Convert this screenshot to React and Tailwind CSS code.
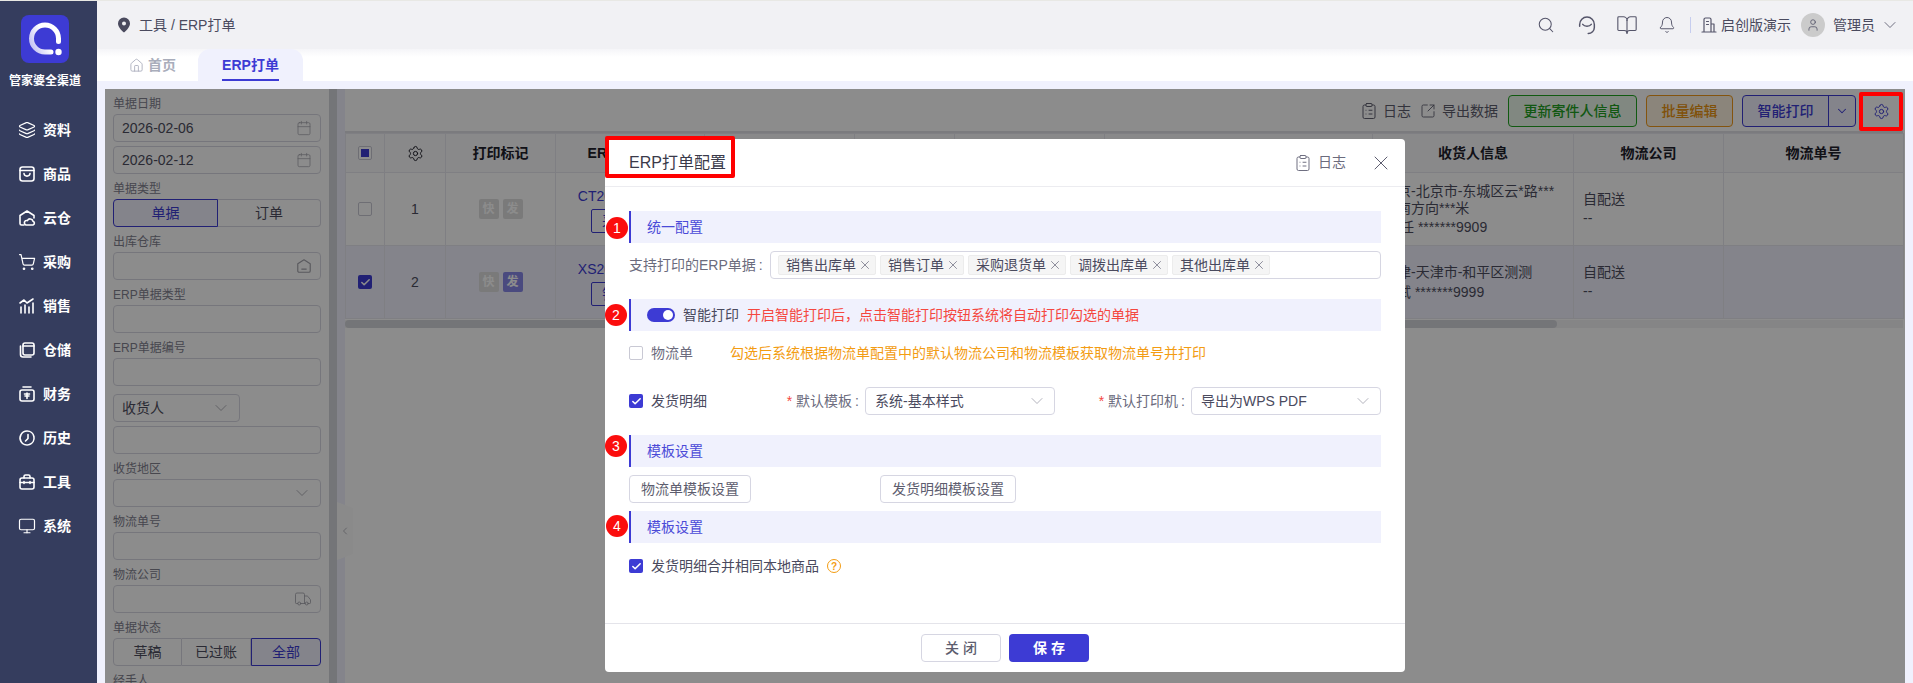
import { useId } from "react";
import {
  Bell,
  BookOpen,
  Calendar,
  Check,
  ChevronDown,
  ChevronLeft,
  ClipboardList,
  Home,
  Layers,
  Monitor,
  Search,
  Settings,
  ShoppingCart,
  SquareArrowOutUpRight,
  Truck,
  User,
  X,
} from "lucide-react";

const FONT = { fontFamily: '"Liberation Sans", "Noto Sans CJK SC", sans-serif' };

const Logo = () => {
  const id = useId();
  return (
    <svg width="48" height="48" viewBox="0 0 48 48">
      <defs>
        <linearGradient id={id} x1="0" y1="0.7" x2="1" y2="0.2">
          <stop offset="0" stopColor="#c9c8f5" />
          <stop offset="0.5" stopColor="#ffffff" />
          <stop offset="1" stopColor="#ffffff" />
        </linearGradient>
      </defs>
      <rect width="48" height="48" rx="8" fill="#3d3bd4" />
      <path
        d="M37.5 26.5V23.5A13.5 13.5 0 1 0 24 37H30"
        fill="none"
        stroke={`url(#${id})`}
        strokeWidth="5"
        strokeLinecap="round"
      />
      <circle cx="37.5" cy="37" r="3.2" fill="#fff" />
    </svg>
  );
};

const Ico = ({ children, size = 18, sw = 1.6 }) => (
  <svg
    width={size}
    height={size}
    viewBox="0 0 18 18"
    fill="none"
    stroke="currentColor"
    strokeWidth={sw}
    strokeLinecap="round"
    strokeLinejoin="round"
  >
    {children}
  </svg>
);

const BagIcon = () => (
  <Ico>
    <rect x="2" y="2" width="14" height="14" rx="2.5" />
    <path d="M2 5.5H16M6 8.5C6.5 12 11.5 12 12 8.5" />
  </Ico>
);
const CloudHouseIcon = () => (
  <Ico>
    <path d="M6 16H3.5A1.5 1.5 0 0 1 2 14.5V6.5L9 2L16 6.5V9" />
    <path d="M8 16H15A2 2 0 0 0 15 12.2A3 3 0 0 0 9.4 11.6A2.3 2.3 0 0 0 8 16Z" />
  </Ico>
);
const ChartIcon = () => (
  <Ico>
    <path d="M2 6L6 3L9 6L15 2M3 16V10M7 16V8M11 16V10M15 16V6" />
  </Ico>
);
const StackIcon = () => (
  <Ico>
    <rect x="5" y="2" width="11" height="12" rx="2" />
    <path d="M5 5H16M2.5 5V13.5A2.5 2.5 0 0 0 5 16H13" />
  </Ico>
);
const JarIcon = () => (
  <Ico>
    <path d="M5 2H13M4 5H14A2 2 0 0 1 16 7V14A2 2 0 0 1 14 16H4A2 2 0 0 1 2 14V7A2 2 0 0 1 4 5Z" />
    <path d="M9 8V13.5M6.5 9H11.5M7 11H11" />
  </Ico>
);
const ClockIcon = () => (
  <Ico>
    <path d="M9 2A7 7 0 1 1 3 12.5M3 12.5A7 7 0 0 1 9 2" />
    <path d="M10 5.5V9.5L7.5 12" />
  </Ico>
);
const ToolboxIcon = () => (
  <Ico>
    <path d="M6 5V3.5A1.5 1.5 0 0 1 7.5 2H10.5A1.5 1.5 0 0 1 12 3.5V5" />
    <rect x="2" y="5" width="14" height="11" rx="2" />
    <path d="M2 9.5H16M6 8.5V10.5M12 8.5V10.5" />
  </Ico>
);
const DepotIcon = () => (
  <Ico size={16} sw={1.3}>
    <path d="M2 6.5L9 2L16 6.5V14.5A1.5 1.5 0 0 1 14.5 16H3.5A1.5 1.5 0 0 1 2 14.5Z" />
    <path d="M6.5 12.5H11.5" />
  </Ico>
);
const HeadsetIcon = () => (
  <Ico size={22} sw={1.2}>
    <path d="M3 8.5A6 6 0 0 1 15 8.5M3 8.5V10M15 8.5V11A5 5 0 0 1 10 16M5.5 8.5C7 10.5 11 10.5 12.5 8.5" />
  </Ico>
);
const OfficeIcon = () => (
  <Ico sw={1.2}>
    <path d="M2 16H16M4 16V3.5A1.5 1.5 0 0 1 5.5 2H9.5A1.5 1.5 0 0 1 11 3.5V16M11 8H14V16M6.5 5.5H8.5M6.5 8.5H8.5" />
  </Ico>
);
const PinIcon = () => (
  <svg width="14" height="16" viewBox="0 0 14 16">
    <path
      fillRule="evenodd"
      d="M7 0.5A6 6 0 0 1 13 6.5C13 10 9.5 13.5 7 15.5C4.5 13.5 1 10 1 6.5A6 6 0 0 1 7 0.5ZM7 4.5A2 2 0 1 0 7 8.5A2 2 0 1 0 7 4.5Z"
      fill="#4a4a5e"
    />
  </svg>
);

const MENU = [
  ["资料", <Layers key="a" size={18} strokeWidth={1.6} />],
  ["商品", <BagIcon key="b" />],
  ["云仓", <CloudHouseIcon key="c" />],
  ["采购", <ShoppingCart key="d" size={18} strokeWidth={1.6} />],
  ["销售", <ChartIcon key="e" />],
  ["仓储", <StackIcon key="f" />],
  ["财务", <JarIcon key="g" />],
  ["历史", <ClockIcon key="h" />],
  ["工具", <ToolboxIcon key="i" />],
  ["系统", <Monitor key="j" size={18} strokeWidth={1.6} />],
];

const Sidebar = () => (
  <aside className="w-[97px] shrink-0 bg-[#353d5e] text-white flex flex-col items-center pr-[7px]">
    <div className="mt-[14px]">
      <Logo />
    </div>
    <div className="mt-[10px] h-[16px] text-[12px] leading-[16px] font-bold">管家婆全渠道</div>
    <nav className="mt-[19px] w-full">
      {MENU.map(([label, icon]) => (
        <div key={label} className="h-[44px] flex items-center pl-[18px] gap-[7px]">
          <span className="w-[18px] h-[18px] flex items-center justify-center">{icon}</span>
          <span className="text-[14px] font-bold">{label}</span>
        </div>
      ))}
    </nav>
  </aside>
);

const Header = () => (
  <header className="h-[48px] shrink-0 bg-[#f1f1f4] flex items-center pl-[20px] pr-[13px] text-[14px] text-[#4a4a5e]">
    <PinIcon />
    <span className="ml-[8px]">工具 / ERP打单</span>
    <div className="ml-auto flex items-center text-[#55556a]">
      <Search size={18} strokeWidth={1.4} />
      <span className="ml-[21px]">
        <HeadsetIcon />
      </span>
      <BookOpen size={22} strokeWidth={1.2} className="ml-[18px]" />
      <Bell size={18} strokeWidth={1.3} className="ml-[20px]" />
      <span className="ml-[14px] w-px h-[16px] bg-[#c6cdef]" />
      <span className="ml-[9px]">
        <OfficeIcon />
      </span>
      <span className="ml-[3px] text-[#4a4a5e]">启创版演示</span>
      <span className="ml-[10px] w-[24px] h-[24px] rounded-full bg-[#cbcbcb] flex items-center justify-center">
        <User size={14} strokeWidth={1.4} />
      </span>
      <span className="ml-[8px] text-[#4a4a5e]">管理员</span>
      <ChevronDown size={20} strokeWidth={1} className="ml-[5px]" />
    </div>
  </header>
);

const Tabs = () => (
  <div className="h-[32px] shrink-0 bg-gradient-to-b from-[#f5f5f8] to-white to-[25%] flex pl-[32px] text-[14px] font-bold">
    <div className="flex items-center gap-[4px] text-[#a9adbb] w-[70px]">
      <Home size={15} strokeWidth={1.4} />
      <span>首页</span>
    </div>
    <div className="ml-[-1px] w-[105px] rounded-t-xl bg-[#f0f1fd] flex justify-center">
      <span className="h-full flex items-center text-[#3d3bd4] border-b-2 border-[#3d3bd4] pt-[2px]">ERP打单</span>
    </div>
  </div>
);

const Field = ({ value, icon, className = "w-full" }) => (
  <div className={`${className} h-[28px] border border-[#d8d8e2] rounded-[4px] flex items-center justify-between pl-[8px] pr-[8px] text-[14px] text-[#4e4e60] bg-white`}>
    <span>{value}</span>
    <span className="text-[#a3a3ab]">{icon}</span>
  </div>
);

const Label = ({ children }) => (
  <div className="h-[25px] pt-[7px] text-[12px] leading-[16px] text-[#81818f]">{children}</div>
);

const Seg = ({ items }) => (
  <div className="flex h-[28px] text-[14px] text-[#4e4e60]">
    {items.map(([label, grow, active], i) => (
      <div
        key={label}
        style={{ width: grow }}
        className={
          active
            ? "border border-[#3d3bd4] bg-[#f0f1fd] text-[#3d3bd4] flex items-center justify-center first:rounded-l-[4px] last:rounded-r-[4px]"
            : `border border-[#d8d8e2] flex items-center justify-center first:rounded-l-[4px] last:rounded-r-[4px] ${i > 0 ? "border-l-0" : ""}`
        }
      >
        {label}
      </div>
    ))}
  </div>
);

const chevron = <ChevronDown size={20} strokeWidth={1} />;
const calendar = <Calendar size={16} strokeWidth={1.1} />;

const FilterPanel = () => (
  <div className="w-[232px] shrink-0 flex h-full overflow-hidden bg-white">
    <div className="w-[224px] px-[8px]">
      <Label>单据日期</Label>
      <Field value="2026-02-06" icon={calendar} />
      <div className="mt-[4px]">
        <Field value="2026-02-12" icon={calendar} />
      </div>
      <Label>单据类型</Label>
      <Seg items={[["单据", 105, true], ["订单", 103]]} />
      <Label>出库仓库</Label>
      <Field icon={<DepotIcon />} />
      <Label>ERP单据类型</Label>
      <Field />
      <Label>ERP单据编号</Label>
      <Field />
      <div className="mt-[8px]">
        <Field value="收货人" icon={chevron} className="w-[127px]" />
      </div>
      <div className="mt-[4px]">
        <Field />
      </div>
      <Label>收货地区</Label>
      <Field icon={chevron} />
      <Label>物流单号</Label>
      <Field />
      <Label>物流公司</Label>
      <Field icon={<Truck size={18} strokeWidth={1.1} />} />
      <Label>单据状态</Label>
      <Seg items={[["草稿", 69], ["已过账", 69], ["全部", 70, true]]} />
      <Label>经手人</Label>
    </div>
    <div className="w-[8px] bg-[#d3d5da]" />
  </div>
);

const TB = ({ className, children }) => (
  <button className={`h-[32px] rounded-[4px] border text-[14px] font-medium flex items-center justify-center ${className}`}>
    {children}
  </button>
);

const Toolbar = () => (
  <div className="h-[42px] pt-[2px] flex items-center justify-end text-[14px] text-[#5d5d6e] pr-[2px]">
    <ClipboardList size={18} strokeWidth={1.3} />
    <span className="ml-[5px]">日志</span>
    <SquareArrowOutUpRight size={16} strokeWidth={1.3} className="ml-[9px]" />
    <span className="ml-[6px]">导出数据</span>
    <TB className="ml-[10px] w-[129px] border-[#1fa51f] bg-[#ecf8ec] text-[#22a022]">更新寄件人信息</TB>
    <TB className="ml-[9px] w-[87px] border-[#f09a1a] bg-[#fdf3e0] text-[#ea9411]">批量编辑</TB>
    <div className="ml-[9px] w-[114px] h-[32px] flex rounded-[4px] border border-[#3d3bd4] bg-[#f0f1fd] text-[#3d3bd4] text-[14px] font-medium">
      <span className="w-[86px] border-r border-[#3d3bd4] flex items-center justify-center">智能打印</span>
      <span className="flex-1 flex items-center justify-center">
        <ChevronDown size={14} strokeWidth={1.8} />
      </span>
    </div>
    <span className="ml-[3px] w-[44px] flex items-center justify-center text-[#3d3bd4]">
      <Settings size={17} strokeWidth={1.4} />
    </span>
  </div>
);

const COLS = [39, 61, 110, 149, 150, 100, 150, 268, 201, 150, 180];

const Box = ({ state }) => (
  <span
    className={`w-[14px] h-[14px] rounded-[2px] flex items-center justify-center ${
      state === "checked" ? "bg-[#3d3bd4]" : "border border-[#c9c9d4] bg-white"
    }`}
  >
    {state === "checked" && <Check size={11} strokeWidth={3.4} className="text-white" />}
    {state === "some" && <span className="w-[8px] h-[8px] bg-[#3d3bd4]" />}
  </span>
);

const Mark = ({ children, on }) => (
  <span className={`w-[20px] h-[20px] rounded-[2px] flex items-center justify-center text-[12px] font-bold text-white ${on ? "bg-[#8788e8]" : "bg-[#dedede]"}`}>
    {children}
  </span>
);

const Row = ({ n, code, type, selected, on, address }) => (
  <tr className={selected ? "h-[73px] bg-[#f0f1fd]" : "h-[73px]"}>
    <td className="border border-[#e8e8ee]">
      <div className="flex justify-center">
        <Box state={selected ? "checked" : "none"} />
      </div>
    </td>
    <td className="border border-[#e8e8ee] text-center">{n}</td>
    <td className="border border-[#e8e8ee]">
      <div className="flex justify-center gap-[4px]">
        <Mark>快</Mark>
        <Mark on={on}>发</Mark>
      </div>
    </td>
    <td className="border border-[#e8e8ee] text-center text-[#3d3bd4]">
      <div>{code}</div>
      <span className="mt-[2px] inline-block w-[78px] h-[24px] border border-[#3d3bd4] rounded-[2px] leading-[22px] text-[14px]">{type}</span>
    </td>
    <td className="border border-[#e8e8ee]" />
    <td className="border border-[#e8e8ee]" />
    <td className="border border-[#e8e8ee]" />
    <td className="border border-[#e8e8ee]" />
    <td className="border border-[#e8e8ee] pl-[10px] leading-[17px]">{address}</td>
    <td className="border border-[#e8e8ee] pl-[9px] leading-[19px]">
      <div>自配送</div>
      <div>--</div>
    </td>
    <td className="border border-[#e8e8ee]" />
  </tr>
);

const HEAD = ["打印标记", "ERP单据编号", "", "", "", "", "收货人信息", "物流公司", "物流单号"];

const DataTable = () => (
  <>
    <div className="h-[2px] w-[1558px] bg-[#e0e0e6]" />
    <table className="table-fixed w-[1558px] border-collapse text-[14px] text-[#4e4e60]">
      <colgroup>
        {COLS.map((w, i) => (
          <col key={i} style={{ width: w }} />
        ))}
      </colgroup>
      <thead>
        <tr className="h-[39px] bg-[#fafafc] font-bold text-[#20202a]">
          <th className="border border-[#e8e8ee]">
            <div className="flex justify-center">
              <Box state="some" />
            </div>
          </th>
          <th className="border border-[#e8e8ee]">
            <div className="flex justify-center">
              <Settings size={17} strokeWidth={1.4} />
            </div>
          </th>
          {HEAD.map((h, i) => (
            <th key={i} className="border border-[#e8e8ee] whitespace-nowrap overflow-hidden">
              {h}
            </th>
          ))}
        </tr>
      </thead>
      <tbody>
        <Row
          n={1}
          code="CT20260212001"
          type="采购订单"
          address={
            <>
              <div className="whitespace-nowrap">北京-北京市-东城区云*路***</div>
              <div>东南方向***米</div>
              <div className="mt-[2px] ml-[3px]">主任 *******9909</div>
            </>
          }
        />
        <Row
          n={2}
          code="XS20260212001"
          type="销售订单"
          selected
          on
          address={
            <>
              <div>天津-天津市-和平区测测</div>
              <div className="mt-[3px]">测试 *******9999</div>
            </>
          }
        />
      </tbody>
    </table>
    <div className="mt-px h-[8px] w-[1558px] bg-[#f2f2f4]">
      <div className="h-full w-[1212px] rounded-full bg-[#d3d5da]" />
    </div>
  </>
);

const Section = ({ children, className = "" }) => (
  <div className={`h-[32px] border-l-2 border-[#3d3bd4] bg-[#f0f1fd] pl-[16px] flex items-center text-[14px] ${className}`}>
    {children}
  </div>
);

const Chip = ({ label }) => (
  <span className="h-[20px] pl-[7px] pr-[3px] rounded-[2px] border border-[#ececec] bg-[#f5f5f5] flex items-center text-[14px] text-[#4a4a5e]">
    {label}
    <X size={14} strokeWidth={1.3} className="ml-[2px] text-[#6e6e80]" />
  </span>
);

const Num = ({ n, className }) => (
  <span className={`absolute w-[22px] h-[22px] rounded-full bg-[#fb0d0d] text-white text-[14px] flex items-center justify-center ${className}`}>
    {n}
  </span>
);

const Required = ({ children }) => (
  <span className="text-[14px] text-[#6b6b7d] whitespace-nowrap">
    <span className="text-[#f5473f] mr-[4px]">*</span>
    {children}
    <span className="ml-[3px]">:</span>
  </span>
);

const Select = ({ value }) => (
  <div className="w-[190px] h-[28px] border border-[#d6d6e2] rounded-[4px] flex items-center justify-between pl-[9px] pr-[7px] text-[14px] text-[#4a4a5e]">
    <span>{value}</span>
    <ChevronDown size={20} strokeWidth={1} className="text-[#a3a3b0]" />
  </div>
);

const Btn = ({ children, className = "" }) => (
  <button className={`h-[28px] px-[11px] border border-[#d6d6e2] rounded-[4px] text-[14px] text-[#5d5d6e] ${className}`}>
    {children}
  </button>
);

const Modal = () => (
  <div className="absolute left-[500px] top-[50px] w-[800px] h-[533px] bg-white rounded-[4px] flex flex-col">
    <div className="h-[48px] shrink-0 border-b border-[#ececf0] flex items-center pl-[24px] pr-[12px]">
      <span className="text-[16px] text-[#3a3a4a]">ERP打单配置</span>
      <ClipboardList size={18} strokeWidth={1.3} className="ml-auto text-[#6b6b7d]" />
      <span className="ml-[6px] text-[14px] text-[#6b6b7d]">日志</span>
      <X size={24} strokeWidth={1} className="ml-[23px] text-[#5d5d70]" />
    </div>

    <div className="flex-1 px-[24px] pt-[24px] text-[14px] text-[#4a4a5e]">
      <Section className="text-[#4a4ad8]">统一配置</Section>
      <div className="mt-[8px] h-[28px] flex items-center">
        <span className="w-[141px] text-[#6b6b7d]">
          支持打印的ERP单据<span className="ml-[3px]">:</span>
        </span>
        <div className="flex-1 h-[28px] border border-[#d6d6e2] rounded-[4px] flex items-center gap-[4px] pl-[7px]">
          {["销售出库单", "销售订单", "采购退货单", "调拨出库单", "其他出库单"].map((t) => (
            <Chip key={t} label={t} />
          ))}
        </div>
      </div>

      <Section className="mt-[20px]">
        <span className="w-[28px] h-[14px] rounded-full bg-[#3d3bd4] flex items-center justify-end pr-[2px]">
          <span className="w-[10px] h-[10px] rounded-full bg-white" />
        </span>
        <span className="ml-[8px]">智能打印</span>
        <span className="ml-[8px] text-[#f5473f]">开启智能打印后，点击智能打印按钮系统将自动打印勾选的单据</span>
      </Section>

      <div className="mt-[8px] h-[28px] flex items-center">
        <Box state="none" />
        <span className="ml-[8px] text-[#6b6b7d]">物流单</span>
        <span className="ml-[37px] text-[#f39c12]">勾选后系统根据物流单配置中的默认物流公司和物流模板获取物流单号并打印</span>
      </div>

      <div className="mt-[20px] h-[28px] flex items-center">
        <div className="w-[426px] flex items-center">
          <Box state="checked" />
          <span className="ml-[8px]">发货明细</span>
          <span className="ml-auto mr-[6px]">
            <Required>默认模板</Required>
          </span>
          <Select value="系统-基本样式" />
        </div>
        <div className="flex-1 flex items-center justify-end">
          <span className="mr-[6px]">
            <Required>默认打印机</Required>
          </span>
          <Select value="导出为WPS PDF" />
        </div>
      </div>

      <Section className="mt-[20px] text-[#4a4ad8]">模板设置</Section>
      <div className="mt-[8px] h-[28px] flex">
        <div className="w-[251px]">
          <Btn>物流单模板设置</Btn>
        </div>
        <Btn>发货明细模板设置</Btn>
      </div>
      <Section className="mt-[8px] text-[#4a4ad8]">模板设置</Section>

      <div className="mt-[16px] h-[14px] flex items-center">
        <Box state="checked" />
        <span className="ml-[8px]">发货明细合并相同本地商品</span>
        <span className="ml-[8px] w-[14px] h-[14px] rounded-full border-[1.5px] border-[#f39c12] text-[#f39c12] text-[10px] font-bold flex items-center justify-center">?</span>
      </div>
    </div>

    <div className="h-[49px] shrink-0 border-t border-[#e4e4ea] flex items-center justify-center gap-[8px]">
      <button className="w-[80px] h-[28px] border border-[#d6d6e2] rounded-[4px] text-[14px] font-medium text-[#5d5d6e]">关 闭</button>
      <button className="w-[80px] h-[28px] rounded-[4px] bg-[#3d3bd4] text-[14px] font-bold text-white">保 存</button>
    </div>

    <span className="absolute left-0 top-[-3px] w-[130px] h-[42px] border-4 border-[#ff0000] rounded-[2px]" />
    <Num n="1" className="left-[1px] top-[78px]" />
    <Num n="2" className="left-0 top-[165px]" />
    <Num n="3" className="left-0 top-[296px]" />
    <Num n="4" className="left-px top-[376px]" />
  </div>
);

export default function App() {
  return (
    <div style={FONT} className="w-screen h-screen overflow-hidden flex bg-white border-t border-[#e8e8e4]">
      <Sidebar />
      <div className="flex-1 min-w-0 flex flex-col">
        <Header />
        <Tabs />
        <div className="flex-1 min-h-0 bg-[#f0f1fd] px-[8px] pt-[8px]">
          <div className="relative h-full flex gap-[8px]">
            <FilterPanel />
            <div className="flex-1 min-w-0 bg-white">
              <Toolbar />
              <DataTable />
            </div>
            <svg className="absolute left-[232px] top-[413px]" width="16" height="58" viewBox="0 0 16 58">
              <path d="M0 0L16 6V52L0 58Z" fill="#fcfcfc" />
            </svg>
            <ChevronLeft size={12} strokeWidth={1.4} className="absolute left-[234px] top-[436px] text-[#9a9aa5]" />
            <div className="absolute inset-0 bg-black/45">
              <span className="absolute left-[1754px] top-[3px] w-[44px] h-[39px] border-4 border-[#ff0000] rounded-[2px]" />
              <Modal />
            </div>
          </div>
        </div>
      </div>
    </div>
  );
}
